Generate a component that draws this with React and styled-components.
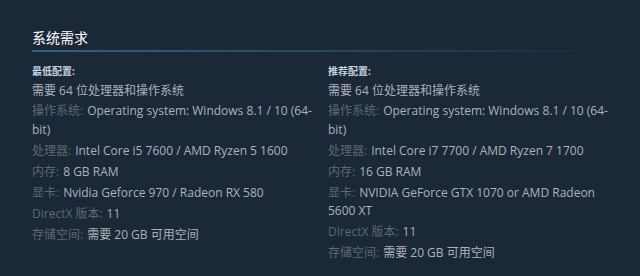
import React from "react";
import styled, { createGlobalStyle } from "styled-components";

const GlobalStyle = createGlobalStyle`
  html, body {
    margin: 0;
    padding: 0;
    background: #1b2838;
  }
  body {
    font-family: "Open Sans", "Noto Sans CJK SC", sans-serif;
  }
`;

const Page = styled.div`
  width: 640px;
  height: 276px;
  box-sizing: border-box;
  padding: 28px 16px 0 32px;
  background: #1b2838;
  overflow: hidden;
`;

const SectionTitle = styled.h2`
  margin: 0;
  font-size: 14px;
  font-weight: normal;
  line-height: 20px;
  color: #ffffff;
  &::after {
    content: "";
    display: block;
    height: 2px;
    margin-top: 2px;
    background: linear-gradient(to right, #34607f 0%, #2a4a63 45%, #1b2838 100%);
  }
`;

const Columns = styled.div`
  display: grid;
  grid-template-columns: 1fr 1fr;
  margin-top: 12px;
`;

const Column = styled.div`
  padding-right: 8px;
`;

const Heading = styled.div`
  font-size: 10px;
  font-weight: bold;
  line-height: 14px;
  color: #c6d4df;
  margin-bottom: 4px;
`;

const List = styled.ul`
  list-style: none;
  margin: 0;
  padding: 0;
`;

const Item = styled.li`
  font-size: 12px;
  line-height: 18.5px;
  color: #acb2b8;
  margin-bottom: ${({ $first }) => ($first ? "1.5px" : "2.5px")};
`;

const Label = styled.span`
  color: #5f6973;
  margin-right: 4px;
`;

const minimum = [
  { text: "需要 64 位处理器和操作系统" },
  { label: "操作系统:", text: "Operating system: Windows 8.1 / 10 (64-bit)" },
  { label: "处理器:", text: "Intel Core i5 7600 / AMD Ryzen 5 1600" },
  { label: "内存:", text: "8 GB RAM" },
  { label: "显卡:", text: "Nvidia Geforce 970 / Radeon RX 580" },
  { label: "DirectX 版本:", text: "11" },
  { label: "存储空间:", text: "需要 20 GB 可用空间" },
];

const recommended = [
  { text: "需要 64 位处理器和操作系统" },
  { label: "操作系统:", text: "Operating system: Windows 8.1 / 10 (64-bit)" },
  { label: "处理器:", text: "Intel Core i7 7700 / AMD Ryzen 7 1700" },
  { label: "内存:", text: "16 GB RAM" },
  { label: "显卡:", text: "NVIDIA GeForce GTX 1070 or AMD Radeon 5600 XT" },
  { label: "DirectX 版本:", text: "11" },
  { label: "存储空间:", text: "需要 20 GB 可用空间" },
];

function Requirements({ title, items }) {
  return (
    <Column>
      <Heading>{title}</Heading>
      <List>
        {items.map((item, i) => (
          <Item key={i} $first={i === 0}>
            {item.label && <Label>{item.label}</Label>}
            {item.text}
          </Item>
        ))}
      </List>
    </Column>
  );
}

export default function App() {
  return (
    <Page>
      <GlobalStyle />
      <SectionTitle>系统需求</SectionTitle>
      <Columns>
        <Requirements title="最低配置:" items={minimum} />
        <Requirements title="推荐配置:" items={recommended} />
      </Columns>
    </Page>
  );
}
